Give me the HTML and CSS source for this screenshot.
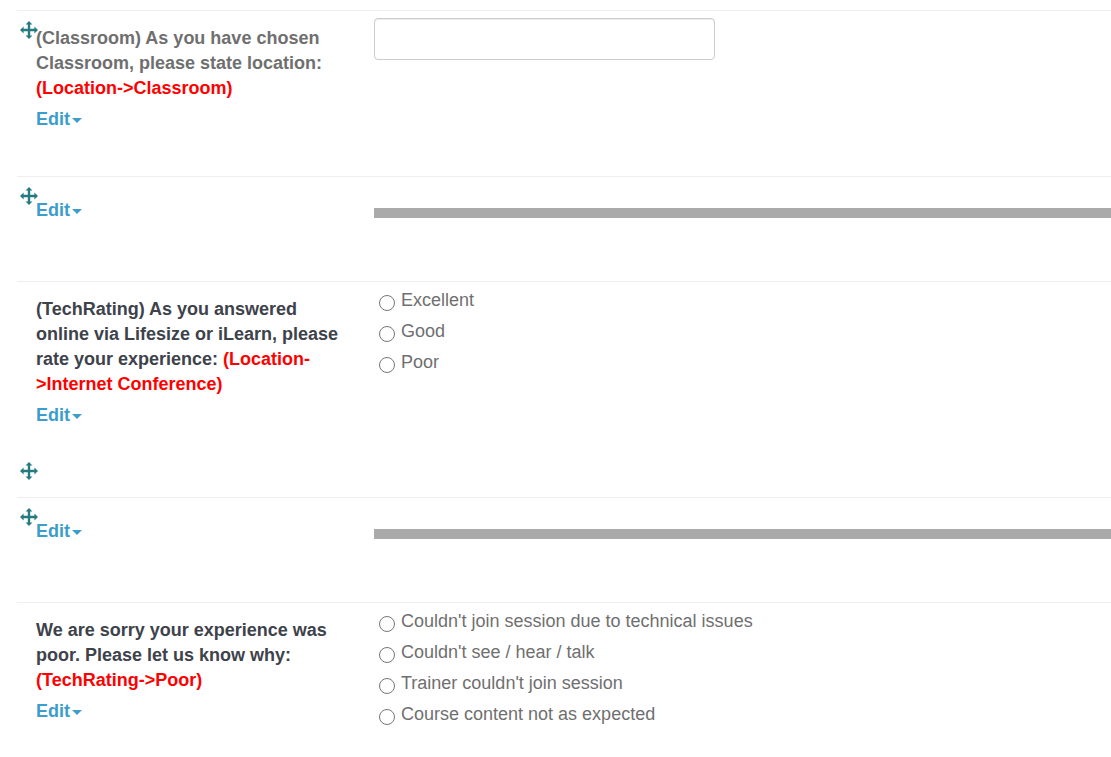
FILE: index.html
```
<!DOCTYPE html>
<html lang="en">
<head>
  <meta charset="utf-8">
  <title>Edit Questions</title>
  <link rel="stylesheet" href="styles.css">
</head>
<body>
  <svg class="sprite" aria-hidden="true">
    <symbol id="move" viewBox="0 0 18 18">
      <path d="M9 0L12.4 3.6H10.2V7.8H14.4V5.6L18 9L14.4 12.4V10.2H10.2V14.4H12.4L9 18L5.6 14.4H7.8V10.2H3.6V12.4L0 9L3.6 5.6V7.8H7.8V3.6H5.6Z"/>
    </symbol>
  </svg>

  <form class="questions">
    <div class="item">
      <div class="handle">
        <button type="button" class="move" aria-label="Move"><svg><use href="#move"/></svg></button>
      </div>
      <div class="question">
        <label class="title muted" for="classroom">(Classroom) As you have chosen Classroom, please state location: <span class="depend">(Location-&gt;Classroom)</span></label>
        <a href="#" class="edit">Edit</a>
      </div>
      <div class="answer">
        <input type="text" class="text-box" id="classroom">
      </div>
    </div>

    <div class="item">
      <div class="handle">
        <button type="button" class="move" aria-label="Move"><svg><use href="#move"/></svg></button>
      </div>
      <div class="question">
        <a href="#" class="edit">Edit</a>
      </div>
      <div class="answer">
        <hr class="bar">
      </div>
    </div>

    <div class="item short">
      <div class="handle"></div>
      <div class="question">
        <div class="title" id="rating">(TechRating) As you answered online via Lifesize or iLearn, please rate your experience: <span class="depend">(Location-<wbr>&gt;Internet Conference)</span></div>
        <a href="#" class="edit">Edit</a>
      </div>
      <div class="answer options" role="radiogroup" aria-labelledby="rating">
        <label><input type="radio" name="rating"> Excellent</label>
        <label><input type="radio" name="rating"> Good</label>
        <label><input type="radio" name="rating"> Poor</label>
      </div>
    </div>

    <div class="item empty">
      <div class="handle">
        <button type="button" class="move" aria-label="Move"><svg><use href="#move"/></svg></button>
      </div>
    </div>

    <div class="item">
      <div class="handle">
        <button type="button" class="move" aria-label="Move"><svg><use href="#move"/></svg></button>
      </div>
      <div class="question">
        <a href="#" class="edit">Edit</a>
      </div>
      <div class="answer">
        <hr class="bar">
      </div>
    </div>

    <div class="item short">
      <div class="handle"></div>
      <div class="question">
        <div class="title" id="reason">We are sorry your experience was poor. Please let us know why: <span class="depend">(TechRating-&gt;Poor)</span></div>
        <a href="#" class="edit">Edit</a>
      </div>
      <div class="answer options" role="radiogroup" aria-labelledby="reason">
        <label><input type="radio" name="reason"> Couldn't join session due to technical issues</label>
        <label><input type="radio" name="reason"> Couldn't see / hear / talk</label>
        <label><input type="radio" name="reason"> Trainer couldn't join session</label>
        <label><input type="radio" name="reason"> Course content not as expected</label>
      </div>
    </div>
  </form>
</body>
</html>
```
FILE: styles.css
```
body {
  font-family: "Liberation Sans", Arial, sans-serif;
  font-size: 18px;
  line-height: 25px;
  color: #6f6f6f;
  background-color: #fff;
  margin: 0;
}

.sprite {
  display: none;
}

.questions {
  padding: 10px 0 0 17px;
}

.item {
  display: flex;
  box-sizing: border-box;
  min-height: 105px;
  padding-bottom: 44px;
  border-top: 1px solid #eee;
}

.item.short {
  padding-bottom: 24px;
}

.item.empty {
  min-height: 45px;
  padding-bottom: 0;
  border-top: none;
}

/* the move icon hangs slightly over the question text */
.handle {
  flex: 0 0 19px;
  min-width: 0;
  padding-top: 10px;
}

.move {
  display: block;
  width: 18px;
  height: 18px;
  margin-left: 3px;
  padding: 0;
  border: none;
  background: none;
  color: #267b80;
  cursor: move;
}

.move svg {
  display: block;
  width: 18px;
  height: 18px;
  fill: currentColor;
}

.question {
  flex: 0 0 308px;
  margin-right: 30px;
  padding-top: 15px;
  font-weight: bold;
}

.title {
  display: block;
  color: #3d424b;
}

.title.muted {
  color: #6f6f6f;
}

.depend {
  color: #f00;
}

.edit {
  display: flex;
  align-items: center;
  width: max-content;
  margin-top: 6px;
  color: #3a9dcb;
  text-decoration: none;
}

.edit::after {
  content: "";
  margin: 2px 0 0 2px;
  border-top: 5px solid;
  border-left: 5px solid transparent;
  border-right: 5px solid transparent;
}

.answer {
  flex: 1;
  min-width: 0;
  padding-top: 7px;
}

.text-box {
  display: block;
  box-sizing: border-box;
  width: 100%;
  max-width: 341px;
  height: 42px;
  padding: 6px 12px;
  border: 1px solid #ccc;
  border-radius: 4px;
  box-shadow: inset 0 1px 1px rgba(0, 0, 0, 0.075);
  font: inherit;
  color: #555;
}

.bar {
  height: 10px;
  margin: 24px 0 0;
  border: none;
  background-color: #aaa;
}

.options {
  display: flex;
  flex-direction: column;
  align-items: flex-start;
  gap: 6px;
  padding-top: 6px;
}

.options label {
  display: flex;
  gap: 6px;
}

.options input {
  width: 16px;
  height: 16px;
  margin: 7px 0 0 5px;
}
```
